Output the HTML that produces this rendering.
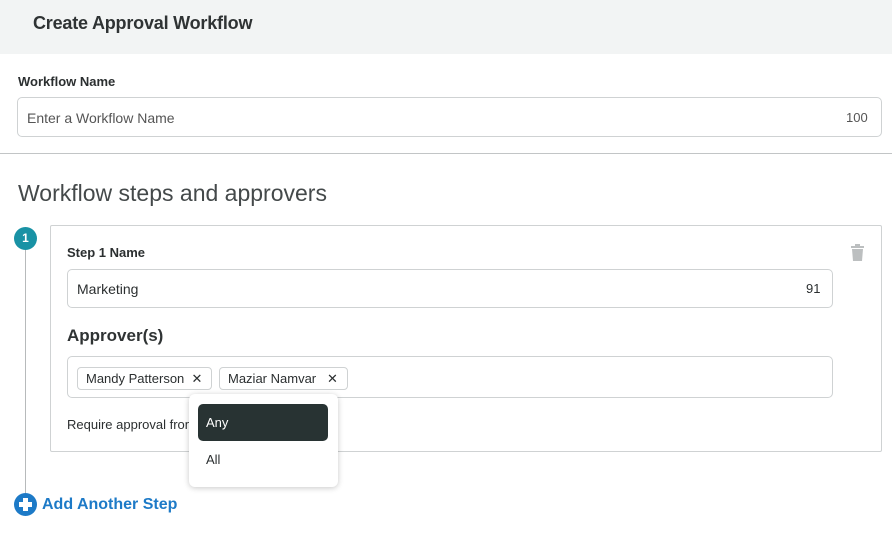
<!DOCTYPE html>
<html><head><style>
*{box-sizing:border-box;margin:0;padding:0}
body{width:892px;height:550px;background:#fff;font-family:"Liberation Sans",sans-serif;color:#2b2f30;position:relative;overflow:hidden}
.abs{position:absolute}
.hdr{left:0;top:0;width:892px;height:54px;background:#f2f4f4}
.input{border:1px solid #cfd2d3;border-radius:5px;background:#fff}
.tag{position:absolute;top:10px;height:23px;border:1px solid #cfd2d3;border-radius:4px;font-size:13px;line-height:21px;padding:0 9px 0 8px;color:#2b2f30}
</style></head><body>
<div class="abs hdr"></div>
<div class="abs" style="left:33px;top:12px;font-size:18px;font-weight:bold;color:#2f3334;line-height:22px;letter-spacing:-0.2px">Create Approval Workflow</div>
<div class="abs" style="left:18px;top:74px;font-size:13px;font-weight:bold;line-height:16px">Workflow Name</div>
<div class="abs input" style="left:17px;top:97px;width:865px;height:40px"></div>
<div class="abs" style="left:27px;top:110px;font-size:14px;color:#555;line-height:16px">Enter a Workflow Name</div>
<div class="abs" style="left:846px;top:110px;font-size:13px;color:#555;line-height:16px">100</div>
<div class="abs" style="left:0;top:153px;width:892px;height:1px;background:#c2c5c6"></div>
<div class="abs" style="left:18px;top:180px;font-size:23px;color:#44494a;line-height:27px">Workflow steps and approvers</div>
<div class="abs" style="left:25px;top:245px;width:1px;height:250px;background:#b7babb"></div>
<div class="abs" style="left:14px;top:227px;width:23px;height:23px;border-radius:50%;background:#1992a5;color:#fff;font-size:12px;font-weight:bold;text-align:center;line-height:23px">1</div>
<div class="abs" style="left:50px;top:225px;width:832px;height:227px;border:1px solid #cfd2d3;border-radius:2px"></div>
<svg class="abs" style="left:850px;top:244px" width="15" height="17" viewBox="0 0 15 17"><rect x="1" y="2" width="13" height="2" fill="#bcbfc0"/><rect x="5" y="0" width="5" height="2" fill="#bcbfc0"/><path d="M2 5h11l-1 12H3z" fill="#bcbfc0"/></svg>
<div class="abs" style="left:67px;top:245px;font-size:13px;font-weight:bold;line-height:16px">Step 1 Name</div>
<div class="abs input" style="left:67px;top:269px;width:766px;height:39px"></div>
<div class="abs" style="left:77px;top:281px;font-size:14px;line-height:16px">Marketing</div>
<div class="abs" style="left:806px;top:281px;font-size:13px;line-height:16px">91</div>
<div class="abs" style="left:67px;top:326px;font-size:17px;font-weight:bold;color:#2f3334;line-height:20px">Approver(s)</div>
<div class="abs input" style="left:67px;top:356px;width:766px;height:42px">
<div class="tag" style="left:9px">Mandy Patterson&nbsp;&nbsp;✕</div>
<div class="tag" style="left:151px">Maziar Namvar&nbsp;&nbsp;&nbsp;✕</div>
</div>
<div class="abs" style="left:67px;top:417px;font-size:13px;line-height:16px">Require approval from any of the approvers.</div>
<div class="abs" style="left:189px;top:394px;width:149px;height:93px;background:#fff;border-radius:6px;box-shadow:0 1px 6px rgba(0,0,0,.22)">
<div class="abs" style="left:9px;top:10px;width:130px;height:37px;background:#283333;border-radius:5px;color:#fff;font-size:13px;line-height:37px;padding-left:8px">Any</div>
<div class="abs" style="left:17px;top:58px;font-size:13px;line-height:16px">All</div>
</div>
<div class="abs" style="left:14px;top:493px;width:23px;height:23px;border-radius:50%;background:#1d7ac7"></div>
<div class="abs" style="left:23px;top:498px;width:5px;height:13px;background:#fff"></div>
<div class="abs" style="left:19px;top:502px;width:13px;height:5px;background:#fff"></div>
<div class="abs" style="left:42px;top:495px;font-size:16px;font-weight:bold;color:#1d7ac7;line-height:19px">Add Another Step</div>
</body></html>
